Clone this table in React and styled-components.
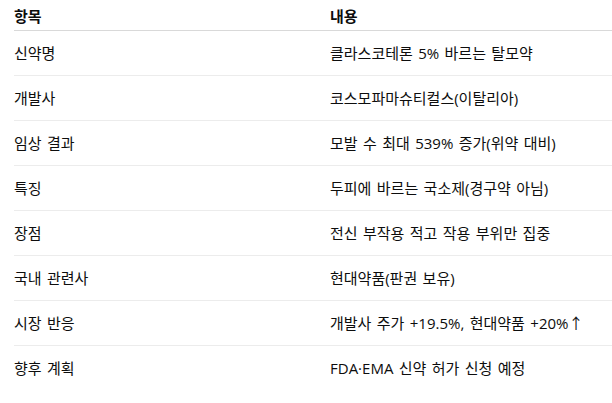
import React from "react";
import styled, { createGlobalStyle } from "styled-components";

const Global = createGlobalStyle`
  html, body { margin: 0; padding: 0; background: #fff; }
  body { font-family: "Open Sans", "Noto Sans CJK KR", sans-serif; color: #0d0d0d; }
`;

const Wrap = styled.div`
  padding-left: 14px;
  overflow: hidden;
`;

const Table = styled.table`
  width: 100%;
  border-collapse: collapse;
  font-size: 15px;
  line-height: 20px;
  word-spacing: 1.5px;
`;

const Th = styled.th`
  text-align: left;
  font-weight: 700;
  padding: 6px 0 4px;
  width: ${(p) => (p.$first ? "316px" : "auto")};
  border-bottom: 1px solid #d9d9d9;
`;

const Tr = styled.tr`
  & + & td { border-top: 1px solid #ececec; }
`;

const Td = styled.td`
  padding: 12px 0;
  vertical-align: middle;
  white-space: nowrap;
`;

const rows = [
  ["신약명", "클라스코테론 5% 바르는 탈모약"],
  ["개발사", "코스모파마슈티컬스(이탈리아)"],
  ["임상 결과", "모발 수 최대 539% 증가(위약 대비)"],
  ["특징", "두피에 바르는 국소제(경구약 아님)"],
  ["장점", "전신 부작용 적고 작용 부위만 집중"],
  ["국내 관련사", "현대약품(판권 보유)"],
  ["시장 반응", "개발사 주가 +19.5%, 현대약품 +20%↑"],
  ["향후 계획", "FDA·EMA 신약 허가 신청 예정"],
];

export default function App() {
  return (
    <>
      <Global />
      <Wrap>
        <Table>
          <thead>
            <tr>
              <Th $first>항목</Th>
              <Th>내용</Th>
            </tr>
          </thead>
          <tbody>
            {rows.map(([k, v], i) => (
              <Tr key={i}>
                <Td>{k}</Td>
                <Td>{v}</Td>
              </Tr>
            ))}
          </tbody>
        </Table>
      </Wrap>
    </>
  );
}
